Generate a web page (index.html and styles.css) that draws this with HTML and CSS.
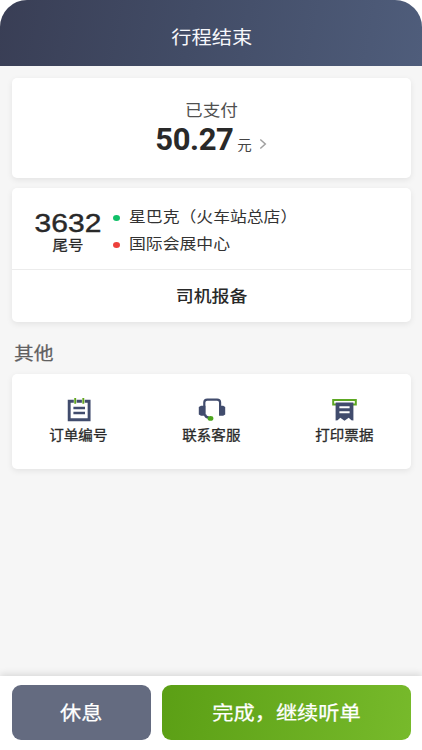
FILE: index.html
```html
<!DOCTYPE html>
<html lang="zh-CN">
<head>
<meta charset="utf-8">
<title>行程结束</title>
<link rel="stylesheet" href="styles.css">
</head>
<body>
<div class="screen">
  <header class="header"><h1 class="title wide">行程结束</h1></header>
  <main class="content">
    <section class="card payment">
      <div class="paid wide">已支付</div>
      <div class="amount-row">
        <span class="amount">50.27</span>
        <span class="unit wide">元</span>
        <svg class="chevron" width="8" height="12" viewBox="0 0 8 12"><path d="M1.3 1.5 6.3 6 1.3 10.5"/></svg>
      </div>
    </section>
    <section class="card trip">
      <div class="trip-info">
        <div class="phone">
          <div class="tail">3632</div>
          <div class="tail-label wide">尾号</div>
        </div>
        <ul class="route">
          <li class="stop start"><span class="place wide">星巴克（火车站总店）</span></li>
          <li class="stop end"><span class="place wide">国际会展中心</span></li>
        </ul>
      </div>
      <div class="report"><span class="wide">司机报备</span></div>
    </section>
    <h2 class="section-title wide">其他</h2>
    <section class="card tools">
      <div class="tool">
        <svg width="26" height="24" viewBox="0 0 26 24">
          <path d="M3.2 3.3h19.9v18.4H3.2z" fill="none" stroke="#414c6d" stroke-width="2.900"/>
          <path d="M7.400 9.900h11.600M7.400 14.900h11.600" stroke="#414c6d" stroke-width="2.500"/>
          <path d="M9.200 0v5.800M17.300 0v5.800" stroke="#fff" stroke-width="2.800"/>
          <path d="M9.200.1v5.600M17.300.1v5.600" stroke="#62a51e" stroke-width="1.900"/>
        </svg>
        <span class="wide">订单编号</span>
      </div>
      <div class="tool">
        <svg width="28" height="24" viewBox="0 0 28 24">
          <path d="M6.300 16.500V4.600Q6.300 1.600 9.300 1.600h9.800q3 0 3 3V16.500M7 16.500q.4 3 4 3.200" fill="none" stroke="#414c6d" stroke-width="2.200"/>
          <path d="M7.400 7.700v10H3L.8 16.500V8.900L3 7.700zM21 7.700v10h4.200l2-1.200V8.900l-2-1.200z" fill="#414c6d"/>
          <ellipse cx="12.500" cy="20.400" rx="2.900" ry="2.300" fill="#4ca51e"/>
        </svg>
        <span class="wide">联系客服</span>
      </div>
      <div class="tool">
        <svg width="28" height="24" viewBox="0 0 28 24">
          <path d="M5 6.600H2.200V2h22.600v4.600H22" fill="none" stroke="#5da823" stroke-width="2"/>
          <path d="M4.600 4.500h17.800v18l-2-.2-2.700-2.500-4.200 3-4.200-3-2.700 2.500-2 .2z" fill="#414c6d"/>
          <path d="M8.400 9.200h10.200M8.400 14.300h10.200" stroke="#fff" stroke-width="1.900"/>
        </svg>
        <span class="wide">打印票据</span>
      </div>
    </section>
  </main>
  <footer class="footer">
    <button class="btn rest"><span class="wide">休息</span></button>
    <button class="btn done"><span class="wide">完成，继续听单</span></button>
  </footer>
</div>
</body>
</html>
```
FILE: styles.css
```css
* { box-sizing: border-box; margin: 0; padding: 0; }
body { background: #fff; font-family: "Noto Sans CJK SC", sans-serif; color: #292929; }
.screen { width: 422px; height: 750px; display: flex; flex-direction: column; border-radius: 27px 27px 0 0; overflow: hidden; background: #f6f6f6; }
.wide { display: inline-block; transform: scaleX(1.1); white-space: nowrap; }
.header { height: 66px; flex: none; display: flex; justify-content: center; padding: 23px 0 0 1px; background: linear-gradient(100deg, #393e55, #424c66 45%, #4f5d7b); }
.title { font-size: 18.4px; line-height: 26px; font-weight: 400; color: #f6f7fb; }
.content { flex: 1; padding: 12px 11px 0 12px; }
.card { background: #fff; border-radius: 5px; box-shadow: 0 2px 6px rgba(0, 0, 0, .08); }
.payment { height: 100px; text-align: center; padding-top: 19px; }
.paid { display: block; font-size: 16px; line-height: 24px; color: #505050; }
.amount-row { display: flex; justify-content: center; align-items: baseline; height: 36px; padding: 1px 1px 0 0; }
.amount { font-family: Roboto, sans-serif; font-weight: 700; font-size: 31px; line-height: 36px; letter-spacing: -.4px; }
.unit { font-size: 13.2px; line-height: 20px; margin-left: 5px; color: #444; }
.chevron { margin-left: 7px; fill: none; stroke: #a0a0a0; stroke-width: 1.5; }
.trip { height: 134px; margin-top: 10px; }
.trip-info { display: flex; height: 82px; border-bottom: 1px solid #ececec; }
.phone { width: 100px; padding: 23px 0 0 12px; text-align: center; }
.tail { font-family: "Liberation Sans", sans-serif; font-size: 25px; line-height: 24px; transform: scaleX(1.2); -webkit-text-stroke: .4px #292929; }
.tail-label { display: block; font-size: 14px; line-height: 18px; -webkit-text-stroke: .3px #292929; }
.route { list-style: none; padding: 16px 0 0 1px; }
.stop { display: flex; align-items: center; height: 27px; }
.stop::before { content: ""; width: 7px; height: 6px; border-radius: 50%; margin-right: 9px; }
.start::before { background: #10c068; }
.end::before { background: #ed403b; }
.place { transform-origin: left; font-size: 15.3px; line-height: 22px; margin-bottom: 6px; color: #333; }
.report { height: 52px; display: flex; align-items: center; justify-content: center; padding-bottom: 2px; font-size: 16.3px; font-weight: 500; }
.section-title { display: block; width: 60px; height: 52px; padding-top: 17px; margin-left: 2px; transform-origin: left; font-size: 18px; line-height: 26px; font-weight: 400; -webkit-text-stroke: .2px #606060; color: #606060; }
.tools { height: 95px; display: flex; padding: 24px 0 0; }
.tool { flex: 1; display: flex; flex-direction: column; align-items: center; font-size: 13.2px; line-height: 20px; -webkit-text-stroke: .3px #292929; }
.tool svg { margin-bottom: 3px; }
.footer { height: 74px; flex: none; display: flex; gap: 11px; padding: 9px 11px 10px 12px; background: #fff; box-shadow: 0 -2px 7px rgba(0, 0, 0, .12); }
.btn { border: 0; border-radius: 9px; height: 55px; padding-bottom: 1px; color: #fff; font: 400 19.3px "Noto Sans CJK SC", sans-serif; -webkit-text-stroke: .25px #fff; }
.rest { width: 139px; background: #646b80; }
.done { flex: 1; background: linear-gradient(100deg, #5b9f15, #77ba2b); }
```
